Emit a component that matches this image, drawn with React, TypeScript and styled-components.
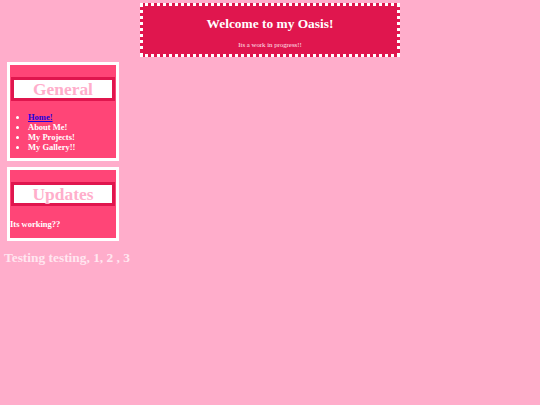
import React from 'react';
import styled, { createGlobalStyle } from 'styled-components';

const GlobalStyle = createGlobalStyle`
html, body {
    margin: 0;
    padding: 0;
    background: #ffadcb;
    font-family: "Liberation Serif", "Times New Roman", serif;
}
`;

const Page = styled.div`
    padding-top: 3px;
    min-height: 402px;
`;

const Header = styled.header`
    width: 254px;
    height: 48px;
    margin: 0 auto;
    border: 3px dotted #ffffff;
    background: #e0164e;
    text-align: center;
    color: #ffffff;
    h1 {
        margin: 0;
        padding-top: 10px;
        font-size: 13.4px;
        line-height: 16px;
        font-weight: bold;
    }
    p {
        margin: 9px 0 0 0;
        font-size: 6.8px;
        line-height: 8px;
        color: #ffe4ee;
    }
`;

interface BoxProps {
    top: number;
}
const SideBox = styled.section<BoxProps>`
    width: 106px;
    margin: ${(props) => props.top}px 0 0 7px;
    border: 3px solid #ffffff;
    background: #ff4577;
    padding: 12px 0 6px 0;
`;

const BoxTitle = styled.h2`
    margin: 0 1px;
    height: 18px;
    border: 3px solid #e0164e;
    background: #ffffff;
    color: #ffaecb;
    text-align: center;
    font-size: 17.4px;
    line-height: 18px;
    font-weight: bold;
`;

const NavList = styled.ul`
    margin: 11px 0 0 0;
    padding-left: 18px;
    color: #ffffff;
    font-size: 8.5px;
    line-height: 10px;
    font-weight: bold;
    li::marker {
        font-size: 9px;
    }
    li a {
        color: #2200dd;
    }
`;

const Note = styled.p`
    margin: 13px 0 3px 0;
    color: #ffffff;
    font-size: 8.5px;
    line-height: 10px;
    font-weight: bold;
`;

const Testing = styled.h3`
    margin: 9px 0 0 4px;
    color: #ffe6f0;
    font-size: 13.4px;
    line-height: 16px;
    font-weight: bold;
`;

function App() {
    return (
        <Page>
            <GlobalStyle />
            <Header>
                <h1>Welcome to my Oasis!</h1>
                <p>Its a work in progress!!</p>
            </Header>
            <SideBox top={5}>
                <BoxTitle>General</BoxTitle>
                <NavList>
                    <li><a href="#">Home!</a></li>
                    <li>About Me!</li>
                    <li>My Projects!</li>
                    <li>My Gallery!!</li>
                </NavList>
            </SideBox>
            <SideBox top={6}>
                <BoxTitle>Updates</BoxTitle>
                <Note>Its working??</Note>
            </SideBox>
            <Testing>Testing testing, 1, 2 , 3</Testing>
        </Page>
    );
}

export default App;
